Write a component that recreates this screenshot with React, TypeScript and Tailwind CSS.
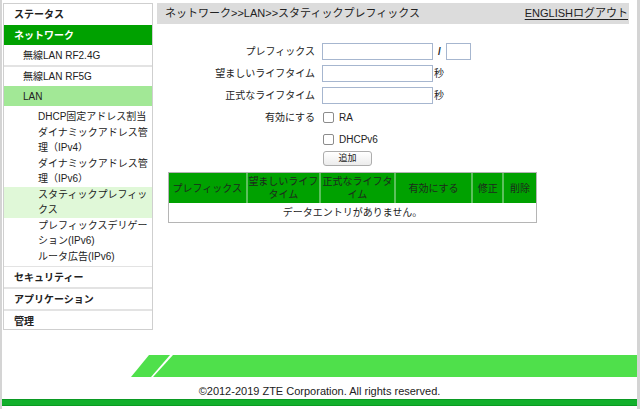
import type { ReactNode } from "react";

const JP = "font-['Liberation_Sans','Noto_Sans_CJK_JP',sans-serif]";

const SUB_ITEMS = [
  "DHCP固定アドレス割当",
  "ダイナミックアドレス管理（IPv4）",
  "ダイナミックアドレス管理（IPv6）",
  "スタティックプレフィックス",
  "プレフィックスデリゲーション(IPv6)",
  "ルータ広告(IPv6)",
];

const COLUMNS = [
  { label: "プレフィックス", w: "w-[77px]" },
  { label: "望ましいライフタイム", w: "w-[74px]" },
  { label: "正式なライフタイム", w: "w-[75px]" },
  { label: "有効にする", w: "w-[78px]" },
  { label: "修正", w: "w-[31px]" },
  { label: "削除", w: "w-[34px]" },
];

function Sidebar() {
  return (
    <div className="w-[150px] shrink-0 border border-[#cfcfcf] bg-white text-[10px] text-[#222]">
      <div className="h-[21px] pl-[10px] flex items-center font-bold">ステータス</div>
      <div className="h-[20px] mb-px pl-[10px] flex items-center font-bold bg-[#00a100] text-white">
        ネットワーク
      </div>
      <div className="h-[21px] pl-[19px] flex items-center border-b-2 border-[#e3e3e3]">無線LAN RF2.4G</div>
      <div className="h-[19px] pl-[19px] flex items-center">無線LAN RF5G</div>
      <div className="h-[20px] pl-[19px] flex items-center bg-[#a2e896]">LAN</div>
      <div className="pt-[3px] pb-[2px] border-b border-[#e3e3e3]">
        {SUB_ITEMS.map((item) => (
          <div
            key={item}
            className={`pl-[34px] pr-[4px] leading-[15.5px] ${
              item === "スタティックプレフィックス" ? "bg-[#e0f8d8]" : ""
            }`}
          >
            {item}
          </div>
        ))}
      </div>
      <div className="h-[22px] pl-[10px] flex items-center font-bold border-b-2 border-[#e3e3e3]">
        セキュリティー
      </div>
      <div className="h-[22px] pl-[10px] flex items-center font-bold border-b-2 border-[#e3e3e3]">
        アプリケーション
      </div>
      <div className="h-[20px] pl-[10px] flex items-center font-bold">管理</div>
    </div>
  );
}

function Row({ label, children }: { label: string; children?: ReactNode }) {
  return (
    <div className="flex items-center h-[17px]">
      <div className="w-[165px] pr-[7px] text-right">{label}</div>
      {children}
    </div>
  );
}

function TextBox({ w }: { w: string }) {
  return <div className={`${w} h-[17px] border border-[#a6b6cf] bg-white`} />;
}

function CheckBox() {
  return <div className="w-[11px] h-[11px] rounded-[2px] border border-[#8c8c8c] bg-white shrink-0" />;
}

function StaticPrefix() {
  return (
    <div className="flex-1 pl-[4px] pr-[8px] text-[10px] text-[#222]">
      <div className="h-[21px] bg-[#dcdcdc] flex items-center justify-between pl-[8px] pr-[1px] text-[11px]">
        <span>ネットワーク&gt;&gt;LAN&gt;&gt;スタティックプレフィックス</span>
        <span className="underline underline-offset-2">ENGLISHログアウト</span>
      </div>

      <div className="mt-[19px] flex flex-col gap-[5px]">
        <Row label="プレフィックス">
          <TextBox w="w-[111px]" />
          <span className="w-[13px] text-center font-bold">/</span>
          <TextBox w="w-[25px]" />
        </Row>
        <Row label="望ましいライフタイム">
          <TextBox w="w-[111px]" />
          <span className="pl-px">秒</span>
        </Row>
        <Row label="正式なライフタイム">
          <TextBox w="w-[111px]" />
          <span className="pl-px">秒</span>
        </Row>
        <Row label="有効にする">
          <div className="flex items-center gap-[5px] pl-px">
            <CheckBox />
            <span>RA</span>
          </div>
        </Row>
        <Row label="">
          <div className="flex items-center gap-[5px] pl-px">
            <CheckBox />
            <span>DHCPv6</span>
          </div>
        </Row>
      </div>

      <div className="mt-[3px] pl-[166px]">
        <div className="w-[49px] h-[15px] rounded-[3px] border border-[#adadad] bg-gradient-to-b from-white to-[#ececec] flex items-center justify-center text-[9px]">
          追加
        </div>
      </div>

      <div className="mt-[6px] ml-[11px] w-[369px] border border-[#b5b5b5]">
        <div className="flex h-[30px] bg-[#00a100]">
          {COLUMNS.map((c, i) => (
            <div
              key={c.label}
              className={`${c.w} flex items-center justify-center text-center leading-[13px] text-[#1d2a1d] ${
                i > 0 ? "border-l-2 border-[#5cc05c]" : ""
              }`}
            >
              {c.label}
            </div>
          ))}
        </div>
        <div className="h-[19px] flex items-center justify-center bg-white">
          データエントリがありません。
        </div>
      </div>
    </div>
  );
}

export default function App() {
  return (
    <div className={`w-[640px] h-[409px] bg-white border-l-2 border-r-[3px] border-[#d4d4d4] ${JP} flex flex-col`}>
      <div className="flex pt-[3px] pl-px h-[330px]">
        <Sidebar />
        <StaticPrefix />
      </div>

      {/* footer banner */}
      <div className="mt-[25px] pl-[129px]">
        <svg width="506" height="22" viewBox="0 0 506 22" className="block">
          <polygon points="0,22 18,0 39,0 20,22" fill="#4fe04b" />
          <polygon points="22,22 42,0 506,0 506,22" fill="#4fe04b" />
        </svg>
      </div>
      <div className="mt-[8px] text-center text-[11px] leading-[13px] text-[#222] font-['Liberation_Sans',sans-serif]">
        ©2012-2019 ZTE Corporation. All rights reserved.
      </div>
      <div className="mt-[1px] h-[7px] bg-[#12b02c] border-y border-[#0b9a23]" />
    </div>
  );
}
